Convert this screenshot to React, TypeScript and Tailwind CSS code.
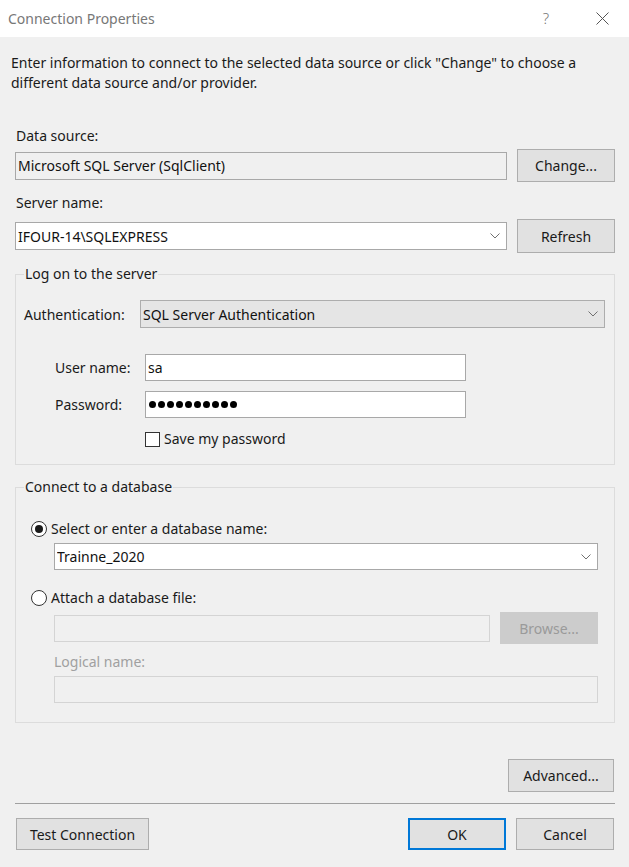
import React from "react";

const font = { fontFamily: '"Noto Sans", "Open Sans", sans-serif' };

function Btn({
  label,
  className = "",
  disabled = false,
  primary = false,
}: {
  label: string;
  className?: string;
  disabled?: boolean;
  primary?: boolean;
}) {
  const tone = disabled
    ? "bg-[#cccccc] border-[#cccccc] text-[#9a9a9a]"
    : primary
    ? "bg-[#e1e1e1] border-[#0078d7] border-2 text-[#1a1a1a]"
    : "bg-[#e1e1e1] border-[#adadad] text-[#1a1a1a]";
  return (
    <div
      className={`flex items-center justify-center border text-[14px] shrink-0 ${tone} ${className}`}
    >
      {label}
    </div>
  );
}

function Chevron() {
  return (
    <svg width="10" height="6" viewBox="0 0 10 6" className="shrink-0">
      <path d="M0.5 0.5 L5 5 L9.5 0.5" fill="none" stroke="#707070" strokeWidth="1" />
    </svg>
  );
}

function Box({
  children,
  className = "",
  combo = false,
  tone = "bg-white border-[#a8a8a8]",
}: {
  children?: React.ReactNode;
  className?: string;
  combo?: boolean;
  tone?: string;
}) {
  return (
    <div
      className={`flex items-center justify-between border pl-[2px] pr-[6px] text-[14px] text-[#111] shrink-0 ${tone} ${className}`}
    >
      <span className="truncate">{children}</span>
      {combo && <Chevron />}
    </div>
  );
}

function Radio({ checked }: { checked: boolean }) {
  return (
    <div className="w-[16px] h-[16px] rounded-full border border-[#333] bg-white flex items-center justify-center shrink-0">
      {checked && <div className="w-[8px] h-[8px] rounded-full bg-[#1a1a1a]" />}
    </div>
  );
}

export default function App() {
  return (
    <div
      className="w-[629px] h-[867px] bg-[#f0f0f0] text-[#1a1a1a] overflow-hidden"
      style={font}
    >
      {/* title bar */}
      <div className="h-[37px] bg-white flex items-center pl-[8px] pr-[20px]">
        <span className="text-[14px] text-[#777777] flex-1">Connection Properties</span>
        <span className="text-[15px] text-[#777777] font-light mr-[47px]">?</span>
        <svg width="13" height="13" viewBox="0 0 13 13">
          <path d="M0.5 0.5 L12.5 12.5 M12.5 0.5 L0.5 12.5" stroke="#555" strokeWidth="1" />
        </svg>
      </div>

      <div className="pt-[16px] pl-[11px] pr-[10px] text-[14px] leading-[20px]">
        Enter information to connect to the selected data source or click "Change" to choose a
        <br />
        different data source and/or provider.
      </div>

      <div className="pl-[15px] w-[615px]">
        <div className="mt-[33px] pl-[1px] h-[20px] leading-[20px] text-[14px]">Data source:</div>
        <div className="mt-[3px] h-[33px] flex items-center justify-between">
          <Box className="w-[492px] h-[28px]" tone="bg-[#f0f0f0] border-[#a8a8a8]">
            Microsoft SQL Server (SqlClient)
          </Box>
          <Btn label="Change..." className="w-[98px] h-[33px]" />
        </div>

        <div className="mt-[11px] pl-[1px] h-[20px] leading-[20px] text-[14px]">Server name:</div>
        <div className="mt-[6px] h-[34px] flex items-center justify-between">
          <Box combo className="w-[492px] h-[28px]">
            IFOUR-14\SQLEXPRESS
          </Box>
          <Btn label="Refresh" className="w-[98px] h-[34px]" />
        </div>

        {/* log on group */}
        <fieldset className="mt-[11px] border border-[#dcdcdc] pl-[8px] pr-[9px] h-[201px]">
          <legend className="text-[14px] leading-[20px] px-[1px]">Log on to the server</legend>
          <div className="mt-[16px] flex items-center">
            <div className="w-[116px] text-[14px]">Authentication:</div>
            <Box combo className="flex-1 h-[28px]" tone="bg-[#e5e5e5] border-[#adadad]">
              SQL Server Authentication
            </Box>
          </div>
          <div className="mt-[26px] flex items-center pl-[31px]">
            <div className="w-[90px] text-[14px]">User name:</div>
            <Box className="w-[321px] h-[27px]">sa</Box>
          </div>
          <div className="mt-[10px] flex items-center pl-[31px]">
            <div className="w-[90px] text-[14px]">Password:</div>
            <div className="w-[321px] h-[27px] bg-white border border-[#a8a8a8] flex items-center gap-[2px] pl-[3px]">
              {Array.from({ length: 10 }).map((_, i) => (
                <span key={i} className="w-[7px] h-[7px] rounded-full bg-black" />
              ))}
            </div>
          </div>
          <div className="mt-[11px] h-[20px] flex items-center pl-[121px]">
            <div className="w-[15px] h-[15px] border border-[#333] bg-white shrink-0" />
            <span className="ml-[4px] text-[14px] leading-[20px]">Save my password</span>
          </div>
        </fieldset>

        {/* connect group */}
        <fieldset className="mt-[12px] border border-[#dcdcdc] pl-[15px] pr-[16px] h-[246px]">
          <legend className="-ml-[7px] text-[14px] leading-[20px] px-[1px]">
            Connect to a database
          </legend>
          <div className="mt-[22px] h-[20px] flex items-center">
            <Radio checked />
            <span className="ml-[4px] text-[14px] leading-[20px]">
              Select or enter a database name:
            </span>
          </div>
          <div className="mt-[4px] pl-[23px]">
            <Box combo className="w-full h-[27px]">
              Trainne_2020
            </Box>
          </div>
          <div className="mt-[18px] h-[20px] flex items-center">
            <Radio checked={false} />
            <span className="ml-[4px] text-[14px] leading-[20px]">Attach a database file:</span>
          </div>
          <div className="mt-[4px] pl-[23px] flex items-center justify-between h-[32px]">
            <Box className="w-[436px] h-[27px]" tone="bg-[#f0f0f0] border-[#d4d4d4]" />
            <Btn label="Browse..." disabled className="w-[98px] h-[32px]" />
          </div>
          <div className="mt-[8px] pl-[23px] h-[20px] leading-[20px] text-[14px] text-[#a0a0a0]">
            Logical name:
          </div>
          <div className="mt-[4px] pl-[23px]">
            <Box className="w-full h-[27px]" tone="bg-[#f0f0f0] border-[#d4d4d4]" />
          </div>
        </fieldset>

        <div className="mt-[36px] flex justify-end">
          <Btn label="Advanced..." className="w-[106px] h-[33px] mr-[1px]" />
        </div>

        <div className="mt-[11px] h-px bg-[#a0a0a0]" />

        <div className="mt-[14px] flex items-center">
          <Btn label="Test Connection" className="w-[133px] h-[32px] ml-[1px]" />
          <div className="flex-1" />
          <Btn label="OK" primary className="w-[98px] h-[32px]" />
          <Btn label="Cancel" className="w-[98px] h-[32px] ml-[10px] mr-[1px]" />
        </div>
      </div>
    </div>
  );
}
